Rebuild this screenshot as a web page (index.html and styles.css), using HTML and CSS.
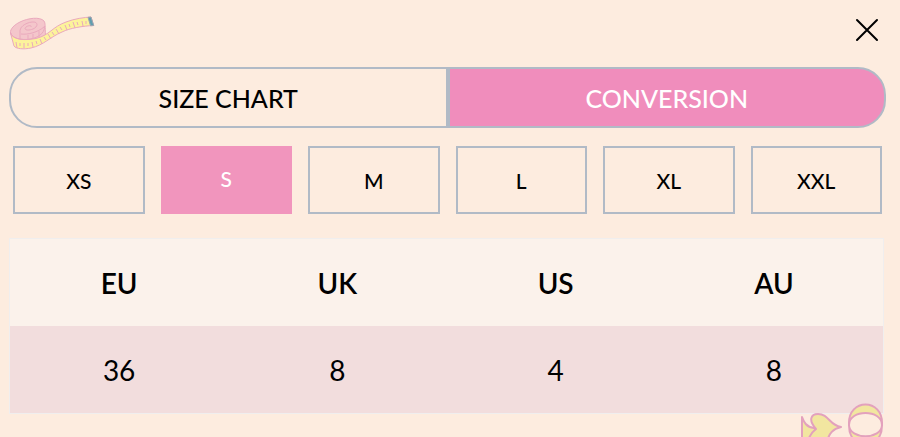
FILE: index.html
```html
<!DOCTYPE html>
<html lang="en">
<head>
<meta charset="utf-8">
<meta name="viewport" content="width=device-width, initial-scale=1">
<title>Size conversion</title>
<link rel="stylesheet" href="styles.css">
</head>
<body>
<main class="panel">
  <header class="panel-header">
    <svg class="tape" viewBox="10 14 86 38" aria-hidden="true">
      <path class="tape-roll" d="M10.500 33C10 29 14 25 20 22C28 18 40 16.500 44 21C45.500 23 45 27 45.500 35L34 41L16 42Z"/>
      <path class="tape-strip" d="M10.500 33C13 40 25 40.500 36 38.500C50 35 52 27 66 22C75 18.500 84 17.500 91 17L93.500 25.500C83 26 70 28 62 32C50 37 44 45 31 48C24 49.500 16 49 14 46Z"/>
      <path class="tape-line" d="M10.500 33C12 38 20 40 27 39.500C37 38.500 45 34 44.500 26M20 39V33C19 27 25 23 32 22C39 21.500 38 27 33 29C28 31 23 30 26 27C28 25.500 32 25 31 27M21 34C28 35 38 32 44 27M28 35V39M33 34V38M39 31V37"/>
      <path class="tape-line" d="M16 42L17 48M20 43V46M24 43V48M28 43V46M32 42L33 47M36 41L37 44M40 39L42 44M44 37L46 40M48 34L51 39M52 32L54 35M56 29L59 34M60 27L62 30M65 25L67 30M69 24L70 27M73 22L75 28M77 22L78 25M82 21L83 26M86 21V24"/>
      <path class="tape-end" d="M88 17.300L91 17L93.800 25.500L90.500 25.800Z"/>
    </svg>
    <button class="close" type="button" aria-label="Close">
      <svg viewBox="0 0 24 24" aria-hidden="true"><path d="M2 2L22 22M22 2L2 22"/></svg>
    </button>
  </header>
  <nav class="tabs" aria-label="Size guide">
    <button class="tab" type="button">SIZE CHART</button>
    <button class="tab active" type="button">CONVERSION</button>
  </nav>
  <div class="sizes">
    <button class="size" type="button">XS</button>
    <button class="size selected" type="button">S</button>
    <button class="size" type="button">M</button>
    <button class="size" type="button">L</button>
    <button class="size" type="button">XL</button>
    <button class="size" type="button">XXL</button>
  </div>
  <table class="conversion">
    <thead><tr><th scope="col">EU</th><th scope="col">UK</th><th scope="col">US</th><th scope="col">AU</th></tr></thead>
    <tbody><tr><td>36</td><td>8</td><td>4</td><td>8</td></tr></tbody>
  </table>
</main>
<svg class="charm" viewBox="800 402 86 35" aria-hidden="true">
  <path d="M802 417C804 422 806 427 814 428L816 430L808 440H802Z"/>
  <path d="M816 429C808 420 811 414 818 414C829 414 829 425 841 427C833 429 829 433 827 442H808C809 435 812 432 816 429Z"/>
  <path fill-rule="evenodd" d="M849 424C848 398 883 398 882 424C883 452 848 452 849 424ZM849 425C849 409 882 409 882 425C882 440 849 440 849 425Z"/>
</svg>
</body>
</html>
```
FILE: styles.css
```css
* { box-sizing: border-box; }

body {
  margin: 0;
  background: #fdecdf;
  color: #000;
  font-family: Lato, "Liberation Sans", sans-serif;
}

button {
  font: inherit;
  color: inherit;
  background: none;
  cursor: pointer;
}

.panel { padding: 0 14px 0 9px; }

.panel-header {
  display: flex;
  justify-content: space-between;
  align-items: center;
  height: 67px;
  padding: 0 7px 8px 1px;
}

.tape { width: 86px; height: 38px; margin-top: 6px; }
.tape path { stroke: #eaa9bd; stroke-width: 1; stroke-linejoin: round; }
.tape .tape-roll { fill: #f4c6cb; }
.tape .tape-strip { fill: #fcf39b; }
.tape .tape-line { fill: none; }
.tape .tape-end { fill: #5f9eaf; stroke: #a0a5b0; }

.close { padding: 0; border: 0; line-height: 0; }
.close svg { width: 24px; height: 24px; }
.close path { stroke: #000; stroke-width: 2; stroke-linecap: round; }

.tabs { display: flex; height: 61px; }

.tab {
  flex: 1;
  padding: 0;
  border: 2px solid #b1bac6;
  font-size: 25px;
  font-weight: 500;
}

.tab:first-child { border-radius: 28px 0 0 28px; }
.tab:last-child { border-radius: 0 28px 28px 0; }
.tab.active { background: #f08dbc; color: #fff; }

.sizes {
  display: grid;
  grid-template-columns: repeat(6, 1fr);
  gap: 16px;
  padding: 18px 4px 24px;
}

.size {
  height: 68px;
  padding: 0;
  border: 2px solid #b1bac6;
  font-size: 21px;
  font-weight: 500;
}

.size.selected {
  padding-bottom: 4px;
  border-color: #f195bd;
  background: #f195bd;
  color: #fff;
}

.conversion {
  width: calc(100% - 2px);
  border: 1px solid #f0eeee;
  border-spacing: 0;
  table-layout: fixed;
  font-size: 28px;
  text-align: center;
}

.conversion th,
.conversion td { height: 87px; padding: 0; }
.conversion th { background: #fbf2eb; font-weight: 600; }
.conversion td { background: #f2dddd; font-weight: 400; }

.charm {
  position: fixed;
  right: 14px;
  bottom: 0;
  width: 86px;
  height: 35px;
}

.charm path { fill: #f2e6a0; stroke: #e3a1bd; stroke-width: 2; stroke-linejoin: round; }
```
